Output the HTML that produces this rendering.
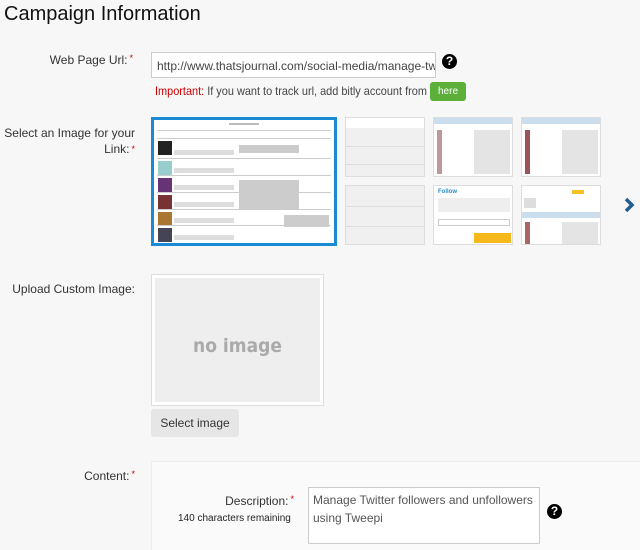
<!DOCTYPE html>
<html><head><style>
*{margin:0;padding:0;box-sizing:border-box}
body{width:640px;height:550px;background:#f7f7f7;font-family:"Liberation Sans",sans-serif;position:relative;overflow:hidden;color:#333}
.a{position:absolute}
.lbl{font-size:12px;color:#333;text-align:right;position:absolute}
.lbl b{color:#c00;font-weight:normal;font-size:9px;vertical-align:top;margin-left:2px}
.q{position:absolute;width:15px;height:15px;border-radius:50%;background:#000;color:#fff;font-size:12px;font-weight:bold;text-align:center;line-height:15px}
.th{position:absolute;background:#fff;border:1px solid #ddd;overflow:hidden}
.row{position:absolute;left:3px;right:3px;height:1px;background:#ccc}
.av{position:absolute;left:4px;width:14px;height:14px;background:#6a4a4a}
.tx{position:absolute;height:2px;background:#aaa}
</style></head><body>
<div class="a" style="left:4px;top:3px;font-size:20px;color:#111">Campaign Information</div>

<div class="lbl" style="right:507px;top:53px;width:130px">Web Page Url:<b>*</b></div>
<div class="a" style="left:151px;top:52px;width:285px;height:26px;background:#fff;border:1px solid #ccc;font-size:12px;color:#444;padding:6px 5px;white-space:nowrap;overflow:hidden">http://www.thatsjournal.com/social-media/manage-tw</div>
<div class="q" style="left:442px;top:54px">?</div>
<div class="a" style="left:155px;top:84px;font-size:12px;color:#444;white-space:nowrap;transform:scaleX(0.91);transform-origin:0 0"><span style="color:#c00">Important:</span> If you want to track url, add bitly account from</div>
<div class="a" style="left:430px;top:82px;width:36px;height:19px;background:#5cb03a;border-radius:3px;color:#fff;font-size:10px;text-align:center;line-height:19px">here</div>

<div class="lbl" style="right:505px;top:125px;width:140px;line-height:16px">Select an Image for your Link:<b>*</b></div>

<div class="th" style="left:151px;top:117px;width:186px;height:129px;border:3px solid #1a8ad4">
 <div class="tx" style="left:75px;top:3px;width:30px;background:#bbb"></div>
 <div class="row" style="top:10px"></div>
 <div class="row" style="top:18px"></div>
 <div class="av" style="top:21px;background:#222"></div>
 <div class="row" style="top:38px"></div>
 <div class="av" style="top:41px;background:#9cc"></div>
 <div class="row" style="top:55px"></div>
 <div class="av" style="top:58px;background:#637"></div>
 <div class="row" style="top:72px"></div>
 <div class="av" style="top:75px;background:#733"></div>
 <div class="row" style="top:89px"></div>
 <div class="av" style="top:92px;background:#a73"></div>
 <div class="row" style="top:105px"></div>
 <div class="av" style="top:108px;background:#445"></div>
 <div class="tx" style="left:85px;top:25px;width:60px;background:#ccc;height:8px"></div>
 <div class="tx" style="left:85px;top:60px;width:60px;background:#ccc;height:30px"></div>
 <div class="tx" style="left:130px;top:95px;width:45px;background:#ccc;height:12px"></div>
 <div class="tx" style="left:20px;top:30px;width:60px;background:#ddd;height:5px"></div>
 <div class="tx" style="left:20px;top:48px;width:60px;background:#ddd;height:5px"></div>
 <div class="tx" style="left:20px;top:65px;width:60px;background:#ddd;height:5px"></div>
 <div class="tx" style="left:20px;top:82px;width:60px;background:#ddd;height:5px"></div>
 <div class="tx" style="left:20px;top:98px;width:60px;background:#ddd;height:5px"></div>
 <div class="tx" style="left:20px;top:115px;width:60px;background:#ddd;height:5px"></div>
</div>
<div class="th" style="left:345px;top:117px;width:80px;height:60px;background:#f0f0f0">
 <div class="a" style="left:0;top:0;width:80px;height:10px;background:#fff"></div>
 <div class="a" style="left:0;top:28px;width:80px;height:1px;background:#ddd"></div>
 <div class="a" style="left:0;top:46px;width:80px;height:1px;background:#ddd"></div>
</div>
<div class="th" style="left:345px;top:185px;width:80px;height:60px;background:#f0f0f0">
 <div class="a" style="left:0;top:20px;width:80px;height:1px;background:#ddd"></div>
 <div class="a" style="left:0;top:40px;width:80px;height:1px;background:#ddd"></div>
</div>
<div class="th" style="left:433px;top:117px;width:80px;height:60px">
 <div class="a" style="left:0;top:0;width:80px;height:6px;background:#cde"></div>
 <div class="a" style="left:3px;top:12px;width:5px;height:44px;background:#b99"></div>
 <div class="a" style="left:40px;top:12px;width:36px;height:44px;background:#e4e4e4"></div>
</div>
<div class="th" style="left:433px;top:185px;width:80px;height:60px">
 <div class="a" style="left:4px;top:3px;font-size:6px;color:#2a8ac8;font-weight:bold">Follow</div>
 <div class="a" style="left:4px;top:12px;width:72px;height:14px;background:#eee"></div>
 <div class="a" style="left:4px;top:33px;width:72px;height:7px;border:1px solid #ccc"></div>
 <div class="a" style="left:40px;top:47px;width:37px;height:10px;background:#f6b81a"></div>
</div>
<div class="th" style="left:521px;top:117px;width:80px;height:60px">
 <div class="a" style="left:0;top:0;width:80px;height:6px;background:#cde"></div>
 <div class="a" style="left:3px;top:12px;width:5px;height:44px;background:#955"></div>
 <div class="a" style="left:40px;top:12px;width:36px;height:44px;background:#e4e4e4"></div>
</div>
<div class="th" style="left:521px;top:185px;width:80px;height:60px">
 <div class="a" style="left:50px;top:4px;width:12px;height:4px;background:#f6c020"></div>
 <div class="a" style="left:2px;top:12px;width:12px;height:10px;background:#ddd"></div>
 <div class="a" style="left:0;top:26px;width:80px;height:6px;background:#cde"></div>
 <div class="a" style="left:3px;top:36px;width:5px;height:22px;background:#a66"></div>
 <div class="a" style="left:40px;top:36px;width:36px;height:22px;background:#e4e4e4"></div>
</div>
<svg class="a" style="left:624px;top:197px" width="12" height="16" viewBox="0 0 12 16"><path d="M2 2 L8 8 L2 14" stroke="#1f5f8f" stroke-width="3.5" fill="none"/></svg>

<div class="lbl" style="right:505px;top:282px;width:140px">Upload Custom Image:</div>
<div class="a" style="left:151px;top:274px;width:173px;height:132px;border:1px solid #ddd;background:#fff;padding:3px">
 <div style="width:100%;height:100%;background:#eee;text-align:center;line-height:136px;font-family:'DejaVu Sans Condensed','DejaVu Sans',sans-serif;font-weight:bold;font-size:19px;color:#aaa">no image</div>
</div>
<div class="a" style="left:151px;top:409px;width:88px;height:28px;background:#e6e6e6;border-radius:3px;font-size:12px;color:#333;text-align:center;line-height:28px">Select image</div>

<div class="a" style="left:151px;top:461px;width:489px;height:89px;background:#fafafa;border-left:1px solid #eee;border-top:1px solid #eee"></div>
<div class="lbl" style="right:505px;top:469px;width:140px">Content:<b>*</b></div>
<div class="lbl" style="right:346px;top:494px;width:140px">Description:<b>*</b></div>
<div class="a" style="left:178px;top:513px;font-size:10px;color:#222">140 characters remaining</div>
<div class="a" style="left:308px;top:487px;width:232px;height:57px;background:#fff;border:1px solid #ccc;font-size:12px;color:#555;padding:3px 4px;line-height:18px;white-space:nowrap">Manage Twitter followers and unfollowers<br>using Tweepi</div>
<div class="q" style="left:547px;top:504px">?</div>
</body></html>
